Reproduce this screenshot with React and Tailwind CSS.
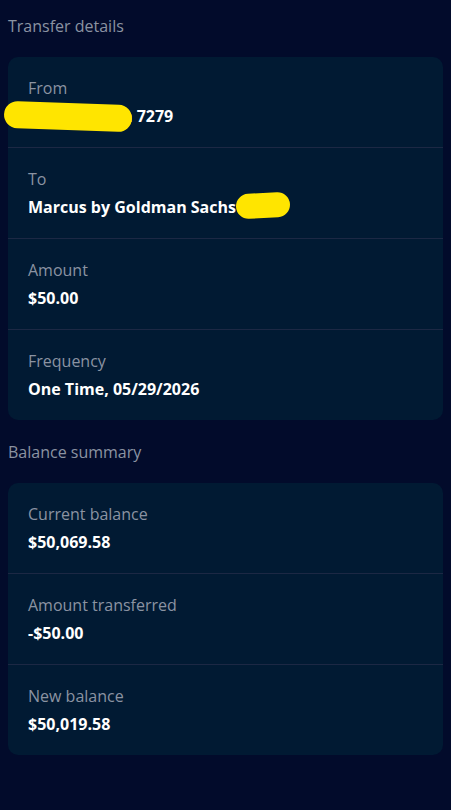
import React from "react";

const transferRows = [
  { label: "From", value: "n 7279", blob: "from" },
  { label: "To", value: "Marcus by Goldman Sachs", blob: "to" },
  { label: "Amount", value: "$50.00" },
  { label: "Frequency", value: "One Time, 05/29/2026" },
];

const balanceRows = [
  { label: "Current balance", value: "$50,069.58" },
  { label: "Amount transferred", value: "-$50.00" },
  { label: "New balance", value: "$50,019.58" },
];

const Row = ({ label, value, blob, last }) => (
  <div
    className={`relative px-5 pt-[20px] pb-[20px] ${
      last ? "" : "border-b border-[#1c2844]"
    }`}
  >
    <div className="text-[16px] leading-[22px] text-[#8b93a2]">{label}</div>
    <div className="mt-[6px] text-[16px] leading-[22px] font-bold text-white">
      {blob === "from" && <span className="inline-block w-[94px]" />}
      {value}
      {blob === "to" && (
        <span className="relative">
          <span className="absolute left-0 top-[-3px] w-[54px] h-[25px] rounded-full bg-[#ffe500] -rotate-3" />
        </span>
      )}
    </div>
    {blob === "from" && (
      <span className="absolute left-[-4px] top-[46px] w-[128px] h-[27px] rounded-full bg-[#ffe500] rotate-2" />
    )}
  </div>
);

const Section = ({ title, rows, first }) => (
  <section>
    <h2
      className={`${
        first ? "pt-[15px]" : "pt-[21px]"
      } mb-[20px] text-[16px] leading-[22px] font-normal text-[#8b93a2]`}
    >
      {title}
    </h2>
    <div className="rounded-[10px] bg-[#011a33]">
      {rows.map((r, i) => (
        <Row key={r.label} {...r} last={i === rows.length - 1} />
      ))}
    </div>
  </section>
);

export default function App() {
  return (
    <div
      className="min-h-[810px] bg-[#020b2b] px-2"
      style={{ fontFamily: '"Open Sans", "Noto Sans", sans-serif' }}
    >
      <Section title="Transfer details" rows={transferRows} first />
      <Section title="Balance summary" rows={balanceRows} />
    </div>
  );
}
